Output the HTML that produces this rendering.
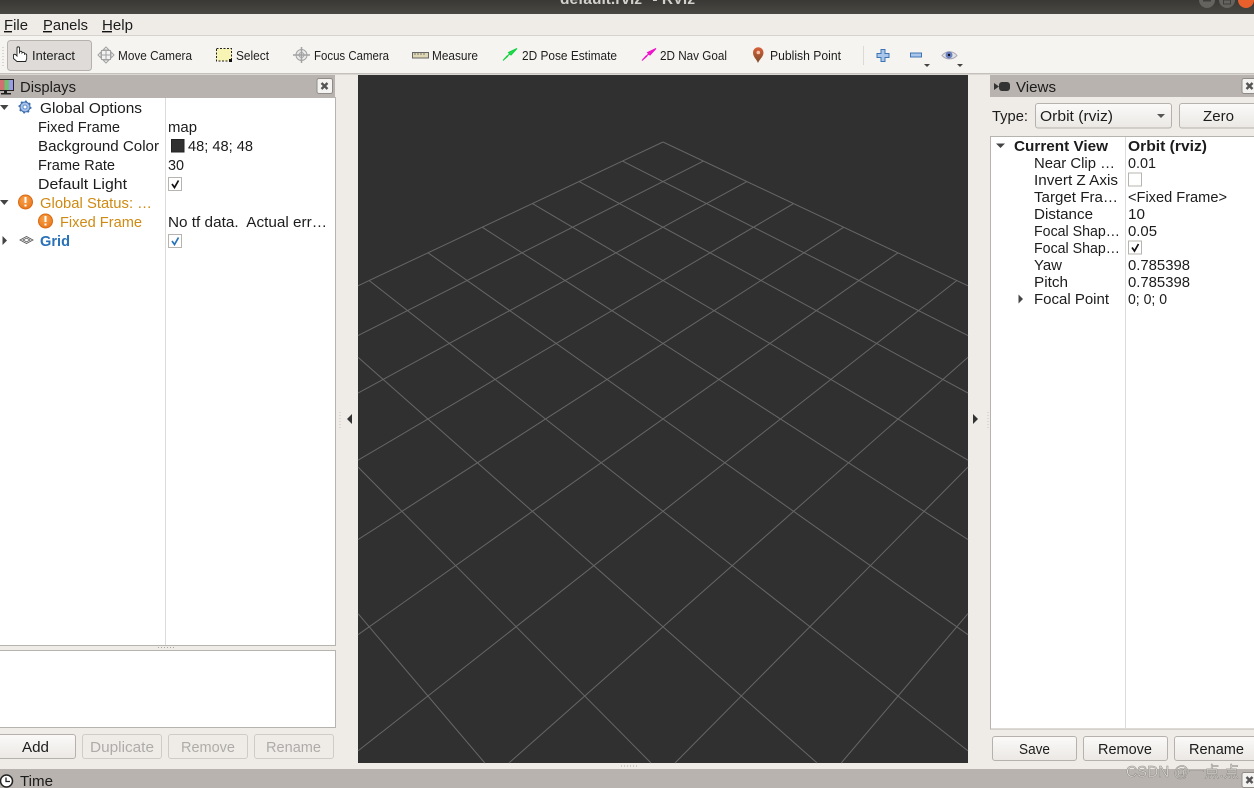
<!DOCTYPE html>
<html lang="en"><head><meta charset="utf-8"><title>default.rviz* - RViz</title>
<style>
html,body{margin:0;padding:0;width:1254px;height:788px;overflow:hidden;background:#efece7}
svg{display:block;overflow:hidden}
text{font-family:"Liberation Sans","Noto Sans CJK SC",sans-serif;font-size:15px;fill:#1c1c1c;white-space:pre}
.t{font-size:13px;fill:#1e1e1e}
.b{font-weight:bold}
.o{fill:#cf8a12}
.d{fill:#aeaca8}
.box{fill:#fff;stroke:#b7b4af}
.btn{fill:url(#bg);stroke:#b5b2ad}
.btnd{fill:#efece8;stroke:#cfccc8}
.cb{fill:#fff;stroke:#b7b4af}
.hd{fill:#b8b3ae}
.cl{fill:#f4f3f1;stroke:#8f8c88}
</style></head><body>
<svg width="1254" height="788" viewBox="0 0 1254 788" xmlns="http://www.w3.org/2000/svg">
<defs>
<linearGradient id="tb" x1="0" y1="0" x2="0" y2="1"><stop offset="0" stop-color="#393834"/><stop offset="1" stop-color="#4a4843"/></linearGradient>
<linearGradient id="bg" x1="0" y1="0" x2="0" y2="1"><stop offset="0" stop-color="#fbfaf9"/><stop offset="1" stop-color="#ebe8e4"/></linearGradient>
<linearGradient id="pin" x1="0" y1="0" x2="0" y2="1"><stop offset="0" stop-color="#d9603a"/><stop offset="1" stop-color="#7a4a2a"/></linearGradient>
<radialGradient id="og" cx=".45" cy=".35" r=".7"><stop offset="0" stop-color="#f9a24a"/><stop offset="1" stop-color="#e8751a"/></radialGradient>
</defs>

<!-- window title bar -->
<rect width="1254" height="14" fill="url(#tb)"/>
<text x="560" y="4" textLength="135" lengthAdjust="spacingAndGlyphs" class="b" style="fill:#d2d0cb">default.rviz* - RViz</text>
<circle cx="1207" cy="0" r="8" fill="#65635e"/><rect x="1203" y="0" width="8" height="1.500" fill="#3f3e3a"/>
<circle cx="1227" cy="0" r="8" fill="#65635e"/><rect x="1223.500" y="0" width="7" height="4" fill="none" stroke="#3f3e3a"/>
<circle cx="1246" cy="0" r="8" fill="#e9602d"/>

<!-- menu -->
<rect y="14" width="1254" height="21" fill="#efece8"/>
<rect y="35" width="1254" height="1" fill="#d6d3cf"/>
<text x="4" y="30" textLength="24" lengthAdjust="spacingAndGlyphs">File</text><rect x="4" y="31" width="8" height="1.400" fill="#111"/>
<text x="43" y="30" textLength="45" lengthAdjust="spacingAndGlyphs">Panels</text><rect x="43" y="31" width="9" height="1.400" fill="#111"/>
<text x="102" y="30" textLength="31" lengthAdjust="spacingAndGlyphs">Help</text><rect x="102" y="31" width="10" height="1.400" fill="#111"/>

<!-- toolbar -->
<rect y="36" width="1254" height="37" fill="#f6f4f0"/>
<rect y="73" width="1254" height="1.500" fill="#c4c1bd"/>
<path d="M3 47V66" stroke="#bcb9b4" stroke-dasharray="1 2"/>
<rect x="7.500" y="40.500" width="84" height="30" rx="3" fill="#dedbd8" stroke="#b5b2ad"/>
<!-- hand -->
<path d="M17 61.500l-3.500-3v-3.500c0-1 2-1 2.500 0l1 1V48c0-1.500 2.500-1.500 2.500 0v5.500l0-1.500c.8-1 2.200-1 2.500 0v1c.8-1 2.200-.8 2.500.2v1c1-.7 2.200-.3 2.200.8v3.500l-1 3z" fill="#fff" stroke="#222" stroke-width=".9"/>
<text x="32" y="60" textLength="43" lengthAdjust="spacingAndGlyphs" class="t">Interact</text>
<!-- move camera -->
<g fill="none" stroke="#a2a2a2"><path d="M106 47l-3 3h6zM106 63l-3-3h6zM98 55l3-3v6zM114 55l-3-3v6z" fill="#f2f2f2"/><rect x="101.500" y="50.500" width="9" height="9" fill="#f2f2f2"/><path d="M106 50v10M101 55h10"/></g>
<text x="118" y="60" textLength="74" lengthAdjust="spacingAndGlyphs" class="t">Move Camera</text>
<!-- select -->
<rect x="216.500" y="48.500" width="15" height="12.500" fill="#f8f4b4" stroke="#222" stroke-dasharray="2 1.500"/>
<rect x="229" y="59" width="3" height="3" fill="#111"/>
<text x="236" y="60" textLength="33" lengthAdjust="spacingAndGlyphs" class="t">Select</text>
<!-- focus -->
<g fill="none" stroke="#a2a2a2"><circle cx="301.500" cy="55" r="5.500" fill="#ececec"/><circle cx="301.500" cy="55" r="2.500"/><path d="M301.500 47v16M293 55h17" stroke-width="1.500"/></g>
<text x="314" y="60" textLength="75" lengthAdjust="spacingAndGlyphs" class="t">Focus Camera</text>
<!-- measure -->
<rect x="412.500" y="52.500" width="16" height="5.500" fill="#e0d8b4" stroke="#666"/>
<path d="M415 53v2M418 53v2M421 53v2M424 53v2" stroke="#777"/>
<text x="432" y="60" textLength="46" lengthAdjust="spacingAndGlyphs" class="t">Measure</text>
<!-- pose -->
<path d="M517 48.500l-6 6.500-1.500-1.500-2 3-4.500 4 4 -4.500 3-2 -1.500-1.500z" fill="#1ee04a" stroke="#13d040" stroke-width="1"/>
<text x="522" y="60" textLength="95" lengthAdjust="spacingAndGlyphs" class="t">2D Pose Estimate</text>
<!-- nav -->
<path d="M656 48.500l-6 6.500-1.500-1.500-2 3-4.500 4 4 -4.500 3-2 -1.500-1.500z" fill="#f018d0" stroke="#ee10c8" stroke-width="1"/>
<text x="660" y="60" textLength="67" lengthAdjust="spacingAndGlyphs" class="t">2D Nav Goal</text>
<!-- pin -->
<path d="M758 63c-1.500-4-5-6-5-10.500a5 5 0 0 1 10.500 0c0 4.500-4 6.500-5.500 10.500z" fill="url(#pin)"/><circle cx="758.300" cy="52.500" r="1.800" fill="#f3c4a8"/>
<text x="770" y="60" textLength="71" lengthAdjust="spacingAndGlyphs" class="t">Publish Point</text>
<rect x="863" y="46" width="1" height="19" fill="#dcdad5"/>
<!-- plus minus eye -->
<path d="M881 49.500h4v4h4v4h-4v4h-4v-4h-4v-4h4z" fill="#a9c6ea" stroke="#3f74b5"/>
<rect x="910.500" y="53" width="11" height="4" fill="#a9c6ea" stroke="#3f74b5"/>
<path d="M924 64h6l-3 3z" fill="#444"/>
<path d="M942 55.500c4-5 11-5 15 0c-4 4.500-11 4.500-15 0z" fill="#e4e4e8" stroke="#a8a8b0"/><circle cx="949" cy="55" r="3.500" fill="#6a80c0"/><circle cx="949" cy="55" r="1.200" fill="#111"/>
<path d="M957 64h6l-3 3z" fill="#444"/>

<!-- displays panel -->
<rect y="75" width="335" height="22" class="hd"/>
<rect x="0" y="79" width="14" height="12" fill="#222"/><rect x="0" y="80" width="4.500" height="10" fill="#d07070"/><rect x="4.500" y="80" width="4.500" height="10" fill="#70c070"/><rect x="9" y="80" width="4" height="10" fill="#9a9ae8"/><path d="M4 91h3v2h4v1.500H1V93h3z" fill="#222"/>
<text x="20" y="92" textLength="56" lengthAdjust="spacingAndGlyphs">Displays</text>
<rect x="317" y="78.500" width="15.500" height="15" rx="2" class="cl"/>
<path d="M321.500 83l6 6M327.500 83l-6 6" stroke="#555" stroke-width="2.400"/>

<rect x="-2" y="97.500" width="337.500" height="548" class="box"/>
<rect x="165" y="98" width="1" height="547" fill="#dddbd8"/>

<path d="M0 105h8.500l-4.200 5z" fill="#444"/>
<g transform="translate(25 107)"><circle r="5" fill="#a8c2e8" stroke="#3f6fb0" stroke-width="1"/><circle r="5.500" fill="none" stroke="#3f6fb0" stroke-width="2" stroke-dasharray="1.800 2.500"/><circle r="2" fill="#fff" stroke="#5f8fc8"/></g>
<text x="40" y="113" textLength="102" lengthAdjust="spacingAndGlyphs">Global Options</text>
<text x="38" y="132" textLength="82" lengthAdjust="spacingAndGlyphs">Fixed Frame</text>
<text x="168" y="132" textLength="29" lengthAdjust="spacingAndGlyphs">map</text>
<text x="38" y="151" textLength="121" lengthAdjust="spacingAndGlyphs">Background Color</text>
<rect x="171.500" y="139.500" width="12.500" height="12.500" fill="#303030" stroke="#222"/>
<text x="188" y="151" textLength="65" lengthAdjust="spacingAndGlyphs">48; 48; 48</text>
<text x="38" y="170" textLength="77" lengthAdjust="spacingAndGlyphs">Frame Rate</text>
<text x="168" y="170" textLength="16" lengthAdjust="spacingAndGlyphs">30</text>
<text x="38" y="189" textLength="89" lengthAdjust="spacingAndGlyphs">Default Light</text>
<rect x="168.500" y="177.500" width="13" height="13" class="cb"/>
<path d="M172 184l2.500 3.500 4-7" fill="none" stroke="#111" stroke-width="1.700"/>

<path d="M0 200h8.500l-4.200 5z" fill="#444"/>
<circle cx="25.500" cy="202" r="7" fill="url(#og)" stroke="#d66a12"/>
<rect x="24.500" y="197" width="2" height="6" fill="#fff"/><rect x="24.500" y="204.500" width="2" height="2" fill="#fff"/>
<text x="40" y="208" textLength="112" lengthAdjust="spacingAndGlyphs" class="o">Global Status: …</text>
<circle cx="45.500" cy="221" r="7" fill="url(#og)" stroke="#d66a12"/>
<rect x="44.500" y="216" width="2" height="6" fill="#fff"/><rect x="44.500" y="223.500" width="2" height="2" fill="#fff"/>
<text x="60" y="227" textLength="82" lengthAdjust="spacingAndGlyphs" class="o">Fixed Frame</text>
<text x="168" y="227" textLength="159" lengthAdjust="spacingAndGlyphs">No tf data.  Actual err…</text>

<path d="M2.500 236v9l4.500-4.500z" fill="#444"/>
<path d="M20 240l6.500-3.500 6.500 3.500-6.500 3.500z M23 240l3.500-1.800 3.500 1.800-3.500 1.800z" fill="none" stroke="#555" stroke-width=".8"/>
<text x="40" y="246" textLength="30" lengthAdjust="spacingAndGlyphs" class="b" style="fill:#2a72b8">Grid</text>
<rect x="168.500" y="234.500" width="13" height="13" class="cb"/>
<path d="M172 241l2.500 3.500 4-7" fill="none" stroke="#2a72b8" stroke-width="1.700"/>

<path d="M158 647.500h16" stroke="#a8a6a2" stroke-dasharray="1 2"/>
<rect x="-2" y="650.500" width="337.500" height="77" class="box"/>

<rect x="-3" y="734.500" width="78.500" height="24" rx="2.500" class="btn"/>
<text x="22" y="752" textLength="27" lengthAdjust="spacingAndGlyphs">Add</text>
<rect x="82.500" y="734.500" width="79" height="24" rx="2.500" class="btnd"/>
<text x="90" y="752" textLength="64" lengthAdjust="spacingAndGlyphs" class="d">Duplicate</text>
<rect x="168.500" y="734.500" width="79" height="24" rx="2.500" class="btnd"/>
<text x="181" y="752" textLength="54" lengthAdjust="spacingAndGlyphs" class="d">Remove</text>
<rect x="254.500" y="734.500" width="79" height="24" rx="2.500" class="btnd"/>
<text x="266" y="752" textLength="55" lengthAdjust="spacingAndGlyphs" class="d">Rename</text>

<!-- 3D view -->
<rect x="358" y="75" width="610" height="688" fill="#303030"/>
<path fill="none" stroke="#666" stroke-width="1" d="
M663 142L968 285.800M622.500 161.100L968 335.600M579.100 181.600L968 393.100M532.400 203.600L968 460.200M482.200 227.200L968 539.600M428 252.800L968 634.700M369.200 280.500L968 750.900M358 357.200L817.100 763M358 467L651 763M358 613.600L484.800 763
M663 142L358 285.800M703.500 161.100L358 335.600M746.900 181.600L358 393.100M793.600 203.600L358 460.200M843.800 227.200L358 539.600M898 252.800L358 634.700M956.800 280.500L358 750.900M968 357.200L508.900 763M968 467L675 763M968 613.600L841.200 763"/>
<path d="M347 419l5-5v10z" fill="#333"/>
<path d="M978 419l-5-5v10z" fill="#333"/>
<path d="M340 412v16" stroke="#c8c5c0" stroke-dasharray="1 2"/>
<path d="M988 412v16" stroke="#c8c5c0" stroke-dasharray="1 2"/>
<path d="M621 766h17" stroke="#a8a6a2" stroke-dasharray="1 2"/>

<!-- views panel -->
<rect x="990" y="75" width="264" height="22" class="hd"/>
<path d="M994 83l5 3.500-5 3.500z" fill="#333"/><rect x="999" y="82" width="11" height="9" rx="3" fill="#333"/>
<text x="1016" y="92" textLength="40" lengthAdjust="spacingAndGlyphs">Views</text>
<rect x="1242" y="78.500" width="16" height="15" rx="2" class="cl"/>
<path d="M1246.500 83l6 6M1252.500 83l-6 6" stroke="#555" stroke-width="2.400"/>

<text x="992" y="121" textLength="36" lengthAdjust="spacingAndGlyphs">Type:</text>
<rect x="1035.500" y="103.500" width="136" height="24.500" rx="2.500" class="btn"/>
<text x="1040" y="121" textLength="73" lengthAdjust="spacingAndGlyphs">Orbit (rviz)</text>
<path d="M1157 114h8l-4 4z" fill="#555"/>
<rect x="1179.500" y="103.500" width="80" height="24.500" rx="2.500" class="btn"/>
<text x="1203" y="121" textLength="31" lengthAdjust="spacingAndGlyphs">Zero</text>

<rect x="990.500" y="136.500" width="270" height="592.500" class="box"/>
<rect x="1125" y="137" width="1" height="592" fill="#dddbd8"/>
<path d="M996 143.500h9l-4.500 4.500z" fill="#444"/>
<text x="1014" y="151" textLength="94" lengthAdjust="spacingAndGlyphs" class="b">Current View</text>
<text x="1128" y="151" textLength="79" lengthAdjust="spacingAndGlyphs" class="b">Orbit (rviz)</text>
<text x="1034" y="168" textLength="81" lengthAdjust="spacingAndGlyphs">Near Clip …</text>
<text x="1128" y="168" textLength="28" lengthAdjust="spacingAndGlyphs">0.01</text>
<text x="1034" y="185" textLength="84" lengthAdjust="spacingAndGlyphs">Invert Z Axis</text>
<rect x="1128.500" y="173" width="13" height="13" class="cb"/>
<text x="1034" y="202" textLength="84" lengthAdjust="spacingAndGlyphs">Target Fra…</text>
<text x="1128" y="202" textLength="99" lengthAdjust="spacingAndGlyphs">&lt;Fixed Frame&gt;</text>
<text x="1034" y="219" textLength="59" lengthAdjust="spacingAndGlyphs">Distance</text>
<text x="1128" y="219" textLength="17" lengthAdjust="spacingAndGlyphs">10</text>
<text x="1034" y="236" textLength="86" lengthAdjust="spacingAndGlyphs">Focal Shap…</text>
<text x="1128" y="236" textLength="29" lengthAdjust="spacingAndGlyphs">0.05</text>
<text x="1034" y="253" textLength="86" lengthAdjust="spacingAndGlyphs">Focal Shap…</text>
<rect x="1128.500" y="241" width="13" height="13" class="cb"/>
<path d="M1132 247.500l2.500 3.500 4-7" fill="none" stroke="#111" stroke-width="1.700"/>
<text x="1034" y="270" textLength="28" lengthAdjust="spacingAndGlyphs">Yaw</text>
<text x="1128" y="270" textLength="62" lengthAdjust="spacingAndGlyphs">0.785398</text>
<text x="1034" y="287" textLength="34" lengthAdjust="spacingAndGlyphs">Pitch</text>
<text x="1128" y="287" textLength="62" lengthAdjust="spacingAndGlyphs">0.785398</text>
<path d="M1018.500 294.500v9l4.500-4.500z" fill="#444"/>
<text x="1034" y="304" textLength="75" lengthAdjust="spacingAndGlyphs">Focal Point</text>
<text x="1128" y="304" textLength="39" lengthAdjust="spacingAndGlyphs">0; 0; 0</text>

<rect x="992.500" y="736.500" width="84" height="24" rx="2.500" class="btn"/>
<text x="1019" y="754" textLength="31" lengthAdjust="spacingAndGlyphs">Save</text>
<rect x="1083.500" y="736.500" width="84" height="24" rx="2.500" class="btn"/>
<text x="1098" y="754" textLength="54" lengthAdjust="spacingAndGlyphs">Remove</text>
<rect x="1174.500" y="736.500" width="84" height="24" rx="2.500" class="btn"/>
<text x="1189" y="754" textLength="55" lengthAdjust="spacingAndGlyphs">Rename</text>

<!-- time panel -->
<rect y="769" width="1254" height="19" class="hd"/>
<circle cx="6.500" cy="781" r="6" fill="#fff" stroke="#222" stroke-width="1.500"/>
<path d="M6 777.500v4h4" fill="none" stroke="#222" stroke-width="1.300"/>
<text x="20" y="786" textLength="33" lengthAdjust="spacingAndGlyphs">Time</text>
<rect x="1242" y="772.500" width="16" height="15" rx="2" class="cl"/>
<path d="M1246.500 777l6 6M1252.500 777l-6 6" stroke="#555" stroke-width="2.400"/>

<!-- watermark -->
<text x="1126" y="777" textLength="113" lengthAdjust="spacingAndGlyphs" style="font-size:15.500px;fill:#e2dfdb;stroke:#8b8884;stroke-width:.5">CSDN @一点.点</text>
</svg>
</body></html>
